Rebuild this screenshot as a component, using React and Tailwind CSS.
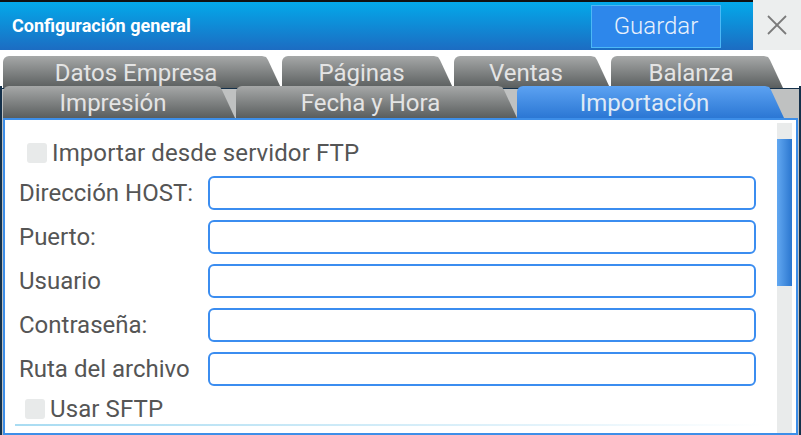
import React from 'react';

const tabClip =
  '[clip-path:polygon(0_0,calc(100%_-_19px)_0,calc(100%_-_15px)_1px,calc(100%_-_13px)_4px,100%_100%,0_100%)]';

function Tab({ label, width, active }) {
  return (
    <div
      className={`h-[32px] shrink-0 rounded-tl-[6px] pr-[12px] flex items-center justify-center text-[24px] leading-none ${tabClip} ${
        active
          ? 'bg-[linear-gradient(to_bottom,#5ca2f2,#2b77d4)] text-[#dfe9f6]'
          : 'bg-[linear-gradient(to_bottom,#a6a8a8,#5a5e5e)] text-[#e4e4e4]'
      }`}
      style={{ width }}
    >
      <span className="pt-[2px]">{label}</span>
    </div>
  );
}

function Checkbox({ label }) {
  return (
    <div className="flex items-center h-[24px]">
      <div className="w-[20px] h-[20px] rounded-[3px] bg-[#e8eaea]" />
      <span className="ml-[5px] text-[#555555] leading-none text-[24px] tracking-[0.1px]">{label}</span>
    </div>
  );
}

export default function App() {
  const fields = ['Dirección HOST:', 'Puerto:', 'Usuario', 'Contraseña:', 'Ruta del archivo'];

  return (
    <div className="w-[801px] h-[435px] overflow-hidden bg-white flex flex-col font-['Roboto','Liberation_Sans',sans-serif]">
      {/* Header */}
      <div className="h-[50px] flex shrink-0">
        <div className="flex-1 border-t-2 border-[#111111] bg-[linear-gradient(to_bottom,#03a9ea,#1c6cc2)] flex items-center justify-between pl-[12px] pr-[32px]">
          <span className="text-white font-bold text-[18px] leading-none">Configuración general</span>
          <button className="w-[130px] h-[43px] bg-[#2d87eb] border border-[#4cb8f6] text-[#e9f1fc] text-[24px] font-light leading-none">
            Guardar
          </button>
        </div>
        <div className="w-[48px] bg-[#eceeee] flex items-center justify-center">
          <svg width="20" height="20" viewBox="0 0 20 20" stroke="#7a7a7a" strokeWidth="1.8">
            <line x1="1" y1="1" x2="19" y2="19" />
            <line x1="19" y1="1" x2="1" y2="19" />
          </svg>
        </div>
      </div>

      {/* Tabs row 1 */}
      <div className="mt-[6px] pl-[3px] flex gap-[1px] shrink-0">
        <Tab label="Datos Empresa" width={278} />
        <Tab label="Páginas" width={171} />
        <Tab label="Ventas" width={156} />
        <Tab label="Balanza" width={172} />
      </div>

      {/* Lower area */}
      <div className="-mt-[2px] flex-1 flex flex-col border-x-2 border-[#14304a] bg-[linear-gradient(to_bottom,transparent_2px,#14304a_2px,#14304a_3px,#bfc1c1_3px)] px-[1px] relative z-10 min-h-0">
        <div className="h-[32px] flex gap-[1px] shrink-0">
          <Tab label="Impresión" width={232} />
          <Tab label="Fecha y Hora" width={281} />
          <div className="-ml-[1px]">
            <Tab label="Importación" width={267} active />
          </div>
        </div>

        {/* Panel */}
        <div className="flex-1 bg-white border-2 border-[#3d8ee8] flex min-h-0">
          <div className="flex-1 pl-[14px] pt-[21px]">
            <div className="ml-[8px]">
              <Checkbox label="Importar desde servidor FTP" />
            </div>
            <div className="mt-[11px] flex flex-col gap-[10px]">
              {fields.map((f) => (
                <div key={f} className="flex items-center h-[34px]">
                  <span className="w-[189px] text-[24px] text-[#555555] leading-none">{f}</span>
                  <div className="w-[548px] h-[34px] rounded-[6px] border-2 border-[#3b8df0]" />
                </div>
              ))}
            </div>
            <div className="mt-[11px] ml-[6px]">
              <Checkbox label="Usar SFTP" />
            </div>
            <div className="mt-[3px] ml-[-4px] h-[2px] w-[750px] bg-[linear-gradient(to_right,#a9dcf2,#e3f3fb_70%,transparent)]" />
          </div>
          <div className="w-[15px] mt-[3px] mr-[4px] bg-[#e9ebeb] flex flex-col">
            <div className="h-[16px]" />
            <div className="h-[147px] bg-[linear-gradient(to_right,#62a8f1,#2a76cf)]" />
          </div>
        </div>
      </div>
    </div>
  );
}
